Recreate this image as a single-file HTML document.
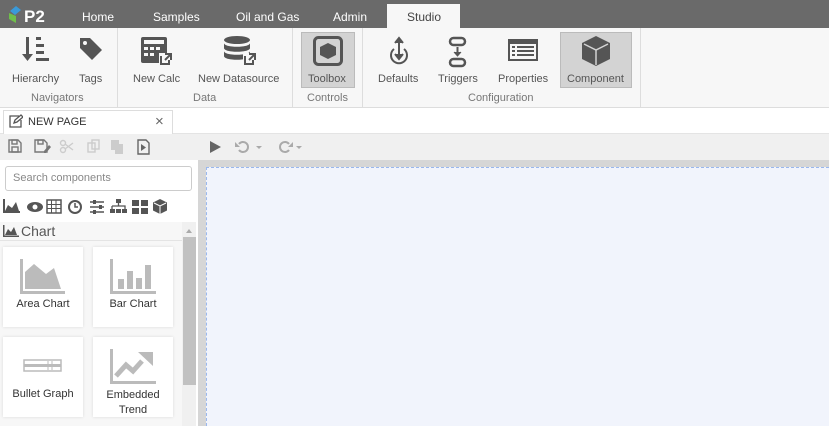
<!DOCTYPE html>
<html><head><style>
*{box-sizing:border-box;margin:0;padding:0}
body{width:829px;height:426px;overflow:hidden;font-family:"Liberation Sans",sans-serif;background:#fff;position:relative;color:#444}
.a{position:absolute}
.top{left:0;top:0;width:829px;height:28px;background:#6a6a6a}
.nav{color:#fff;font-size:12px;top:10px}
.rib{left:0;top:28px;width:829px;height:80px;background:#f7f7f7;border-bottom:1px solid #ddd}
.sep{top:28px;width:1px;height:80px;background:#ddd}
.lbl{font-size:11px;color:#555;text-align:center;white-space:nowrap}
.grp{font-size:11px;color:#777;top:92px;white-space:nowrap}
.hl{background:#d3d3d3;border:1px solid #bbb}
.card{background:#fff;width:80px;height:80px;box-shadow:0 0 3px rgba(0,0,0,.12)}
.cl{font-size:11px;color:#333;text-align:center;width:80px;left:0}
</style></head><body>
<div class="a top"></div>
<svg class="a" style="left:8px;top:3px" width="42" height="22" viewBox="0 0 42 22"><path d="M2 8l6-5 5 4-6 5z" fill="#3a9ad9"/><path d="M1 10l7 3v7l-7-4z" fill="#6fbf4a"/><text x="16" y="19" font-family="Liberation Sans" font-weight="bold" font-size="17" fill="#fff">P2</text></svg>
<div class="a nav" style="left:82px">Home</div>
<div class="a nav" style="left:153px">Samples</div>
<div class="a nav" style="left:236px">Oil and Gas</div>
<div class="a nav" style="left:333px">Admin</div>
<div class="a" style="left:387px;top:4px;width:73px;height:25px;background:#f7f7f7"></div>
<div class="a nav" style="left:407px;color:#444">Studio</div>
<div class="a rib"></div>
<div class="a sep" style="left:117px"></div><div class="a sep" style="left:292px"></div><div class="a sep" style="left:362px"></div><div class="a sep" style="left:640px"></div>
<div class="a hl" style="left:301px;top:32px;width:54px;height:56px"></div>
<div class="a hl" style="left:560px;top:32px;width:72px;height:56px"></div>
<svg class="a" style="left:22px;top:35px" width="30" height="30" fill="#555"><rect x="4" y="2" width="3" height="20"/><path d="M0 19h11l-5.5 7z"/><rect x="14" y="2" width="5" height="3"/><rect x="14" y="9" width="8" height="3"/><rect x="14" y="16" width="8" height="3"/><rect x="14" y="23" width="13" height="3"/></svg>
<svg class="a" style="left:78px;top:36px" width="26" height="26" fill="#555"><path d="M2 2h10l12 12-10 10L2 12z"/><circle cx="7" cy="7" r="2" fill="#f7f7f7"/></svg>
<svg class="a" style="left:139px;top:35px" width="36" height="32" fill="#555"><rect x="2" y="2" width="26" height="26" rx="2"/><g fill="#f7f7f7"><rect x="5" y="5" width="20" height="4"/><rect x="5" y="12" width="4" height="3"/><rect x="11" y="12" width="4" height="3"/><rect x="17" y="12" width="4" height="3"/><rect x="5" y="18" width="4" height="3"/><rect x="11" y="18" width="4" height="3"/></g><rect x="20" y="18" width="14" height="13" fill="#f7f7f7"/><path d="M22 21v8h8v-4M26 19h6v6M32 19l-6 6" stroke="#555" stroke-width="2" fill="none"/></svg>
<svg class="a" style="left:223px;top:35px" width="36" height="32" fill="#555"><ellipse cx="14" cy="5" rx="13" ry="4"/><path d="M1 8c0 5 26 5 26 0v5c0 5-26 5-26 0z"/><path d="M1 16c0 5 26 5 26 0v5c0 5-26 5-26 0z"/><rect x="20" y="18" width="14" height="13" fill="#f7f7f7"/><path d="M22 21v8h8v-4M26 19h6v6M32 19l-6 6" stroke="#555" stroke-width="2" fill="none"/></svg>
<svg class="a" style="left:313px;top:36px" width="30" height="30"><rect x="1.5" y="1.5" width="27" height="27" rx="4" fill="none" stroke="#555" stroke-width="3"/><path d="M15 7l8 4v8l-8 4-8-4v-8z" fill="#555"/></svg>
<svg class="a" style="left:386px;top:36px" width="26" height="32" fill="none" stroke="#555" stroke-width="2"><path d="M8 13a8 8 0 1 0 10 0"/><path d="M13 3v18"/><path d="M9 7l4-5 4 5" fill="#555"/><path d="M9 18l4 5 4-5" fill="#555"/></svg>
<svg class="a" style="left:448px;top:36px" width="20" height="32" fill="none" stroke="#555" stroke-width="2.5"><rect x="2" y="2" width="15" height="7" rx="3.5"/><rect x="2" y="23" width="15" height="7" rx="3.5"/><path d="M9.5 11v8" stroke-width="2"/><path d="M6 16l3.5 4 3.5-4" fill="#555" stroke-width="1"/></svg>
<svg class="a" style="left:507px;top:38px" width="32" height="26"><rect x="1" y="1" width="30" height="22" fill="#555"/><rect x="3" y="6" width="26" height="15" fill="#f7f7f7"/><g fill="#555"><rect x="5" y="8" width="3" height="2"/><rect x="10" y="8" width="17" height="2"/><rect x="5" y="12" width="3" height="2"/><rect x="10" y="12" width="17" height="2"/><rect x="5" y="16" width="3" height="2"/><rect x="10" y="16" width="17" height="2"/></g></svg>
<svg class="a" style="left:580px;top:35px" width="32" height="32" fill="#555"><path d="M16 1l14 7v16l-14 7-14-7V8z"/><path d="M4 9l12 6 12-6" stroke="#d3d3d3" stroke-width="1.5" fill="none"/><path d="M16 15v15" stroke="#d3d3d3" stroke-width="1.5"/></svg>
<div class="a lbl" style="left:12px;top:73px">Hierarchy</div>
<div class="a lbl" style="left:79px;top:73px">Tags</div>
<div class="a lbl" style="left:133px;top:73px">New Calc</div>
<div class="a lbl" style="left:198px;top:73px">New Datasource</div>
<div class="a lbl" style="left:308px;top:73px">Toolbox</div>
<div class="a lbl" style="left:378px;top:73px">Defaults</div>
<div class="a lbl" style="left:438px;top:73px">Triggers</div>
<div class="a lbl" style="left:498px;top:73px">Properties</div>
<div class="a lbl" style="left:567px;top:73px">Component</div>
<div class="a grp" style="left:31px">Navigators</div>
<div class="a grp" style="left:193px">Data</div>
<div class="a grp" style="left:307px">Controls</div>
<div class="a grp" style="left:468px">Configuration</div>
<div class="a" style="left:0;top:109px;width:829px;height:25px;background:#fff;border-bottom:1px solid #e4e4e4"></div>
<div class="a" style="left:3px;top:110px;width:170px;height:24px;background:#fff;border:1px solid #ddd;border-bottom:none"></div>
<svg class="a" style="left:9px;top:114px" width="14" height="14" fill="none" stroke="#555" stroke-width="1.3"><path d="M10 2H1v11h11V6"/><path d="M5 9l1-3 6-5 2 2-6 5z"/></svg>
<div class="a" style="left:28px;top:116px;font-size:11px;color:#333">NEW PAGE</div>
<div class="a" style="left:155px;top:113px;font-size:15px;color:#666">×</div>
<div class="a" style="left:0;top:134px;width:829px;height:26px;background:#f0f0f0"></div>
<svg class="a" style="left:8px;top:139px" width="150" height="16"><g fill="none" stroke="#777" stroke-width="1.4"><path d="M1 1h9l3 3v9H1z"/><rect x="4" y="1" width="5" height="4"/><rect x="4" y="8" width="6" height="5"/><path d="M27 1h9l3 3v9H27z"/><rect x="30" y="1" width="5" height="4"/></g><path d="M36 12l5-6 2 2-5 6h-2z" fill="#777"/><g fill="none" stroke="#ccc" stroke-width="1.4"><circle cx="55" cy="4" r="2.5"/><circle cx="55" cy="11" r="2.5"/><path d="M57 5l8 6M57 10l8-6"/><rect x="80" y="4" width="7" height="9"/><rect x="84" y="1" width="7" height="9"/></g><g fill="#ccc"><rect x="103" y="1" width="8" height="10"/><rect x="107" y="5" width="8" height="10"/></g><path d="M130 1h8l3 3v11h-11z" fill="none" stroke="#666" stroke-width="1.4"/><path d="M133 5l5 3.5-5 3.5z" fill="#666"/></svg>
<svg class="a" style="left:207px;top:140px" width="100" height="14"><path d="M3 1l11 6-11 6z" fill="#666"/><path d="M32 4a5 5 0 1 1 0 6" stroke="#aaa" stroke-width="2" fill="none"/><path d="M28 2v5h5z" fill="#aaa"/><path d="M49 6l3 3 3-3z" fill="#aaa"/><path d="M82 4a5 5 0 1 0 0 6" stroke="#aaa" stroke-width="2" fill="none"/><path d="M86 2v5h-5z" fill="#aaa"/><path d="M89 6l3 3 3-3z" fill="#aaa"/></svg>
<div class="a" style="left:198px;top:160px;width:631px;height:266px;background:#d6d6d6"></div>
<div class="a" style="left:206px;top:167px;width:623px;height:259px;background:#f1f4fc;border-left:1px dashed #9ab8ee;border-top:1px dashed #9ab8ee"></div>
<div class="a" style="left:5px;top:166px;width:187px;height:25px;border:1px solid #ccc;border-radius:3px;background:#fff"></div>
<div class="a" style="left:13px;top:172px;font-size:11px;color:#888">Search components</div>
<svg class="a" style="left:2px;top:197px" width="170" height="18" fill="#555"><path d="M1 2v14h17v-2H3V2z"/><path d="M3 14l3-6 4 3 4-6 3 9z"/><ellipse cx="33" cy="10" rx="8" ry="5"/><circle cx="33" cy="10" r="2.5" fill="#fff"/><rect x="45" y="3" width="14" height="13" fill="none" stroke="#555" stroke-width="1.5"/><path d="M45 7.5h14M45 11.5h14M49.5 3v13M54 3v13" stroke="#555"/><circle cx="73" cy="10" r="6" fill="none" stroke="#555" stroke-width="2"/><path d="M73 6v4h3" stroke="#555" fill="none" stroke-width="1.5"/><path d="M88 5h14M88 10h14M88 15h14" stroke="#555" stroke-width="1.5"/><rect x="91" y="3" width="3" height="4"/><rect x="97" y="8" width="3" height="4"/><rect x="91" y="13" width="3" height="4"/><rect x="114" y="2" width="5" height="4"/><rect x="108" y="12" width="5" height="4"/><rect x="114" y="12" width="5" height="4"/><rect x="120" y="12" width="5" height="4"/><path d="M116.5 6v3M110 9h13v3M110 9v3" stroke="#555" fill="none" stroke-width="1.3"/><rect x="130" y="3" width="7" height="6"/><rect x="139" y="3" width="7" height="6"/><rect x="130" y="11" width="7" height="6"/><rect x="139" y="11" width="7" height="6"/><path d="M158 2l7 3.5v8l-7 3.5-7-3.5v-8z"/><path d="M152 6l6 3 6-3M158 9v8" stroke="#fff" fill="none"/></svg>
<div class="a" style="left:0;top:222px;width:182px;height:19px;background:#f7f7f7;border-bottom:1px solid #e4e4e4"></div>
<svg class="a" style="left:3px;top:225px" width="16" height="12" fill="#555"><path d="M0 0v12h16v-1.5H1.5V0z"/><path d="M2 10l3-6 3 3 3-5 3 8z"/></svg>
<div class="a" style="left:21px;top:223px;font-size:14px;color:#555">Chart</div>
<div class="a" style="left:182px;top:222px;width:14px;height:204px;background:#f0f0f0"></div>
<div class="a" style="left:186px;top:226px;border:3px solid transparent;border-bottom:4px solid #aaa;width:0;height:0"></div>
<div class="a" style="left:183px;top:237px;width:13px;height:148px;background:#c1c1c1"></div>
<div class="a" style="left:0;top:241px;width:182px;height:185px;background:#f7f7f7"></div>
<div class="a card" style="left:3px;top:247px"><svg class="a" style="left:17px;top:12px" width="46" height="36" fill="#bbb"><path d="M0 0h3v32h42v3H0z"/><path d="M5 30V13l9-8 12 10 8-6 7 21z"/></svg><div class="a cl" style="top:51px">Area Chart</div></div>
<div class="a card" style="left:93px;top:247px"><svg class="a" style="left:17px;top:12px" width="46" height="36" fill="#bbb"><path d="M0 0h3v32h43v3H0z"/><rect x="8" y="20" width="6" height="10"/><rect x="17" y="12" width="6" height="18"/><rect x="26" y="19" width="6" height="11"/><rect x="35" y="6" width="6" height="24"/></svg><div class="a cl" style="top:51px">Bar Chart</div></div>
<div class="a card" style="left:3px;top:337px"><svg class="a" style="left:20px;top:22px" width="40" height="14"><rect x="1" y="1" width="37" height="11" fill="none" stroke="#bbb" stroke-width="1.5"/><path d="M1 6.5h37" stroke="#bbb" stroke-width="3"/><path d="M25 2v9M29 2v9" stroke="#bbb"/></svg><div class="a cl" style="top:51px">Bullet Graph</div></div>
<div class="a card" style="left:93px;top:337px"><svg class="a" style="left:17px;top:12px" width="46" height="36" fill="#bbb"><path d="M0 0h3v32h43v3H0z"/><path d="M6 27l10-11 7 6 9-10" stroke="#bbb" stroke-width="5" fill="none"/><path d="M28 3h15v14z"/></svg><div class="a cl" style="top:51px;line-height:15px">Embedded<br>Trend</div></div>
</body></html>
